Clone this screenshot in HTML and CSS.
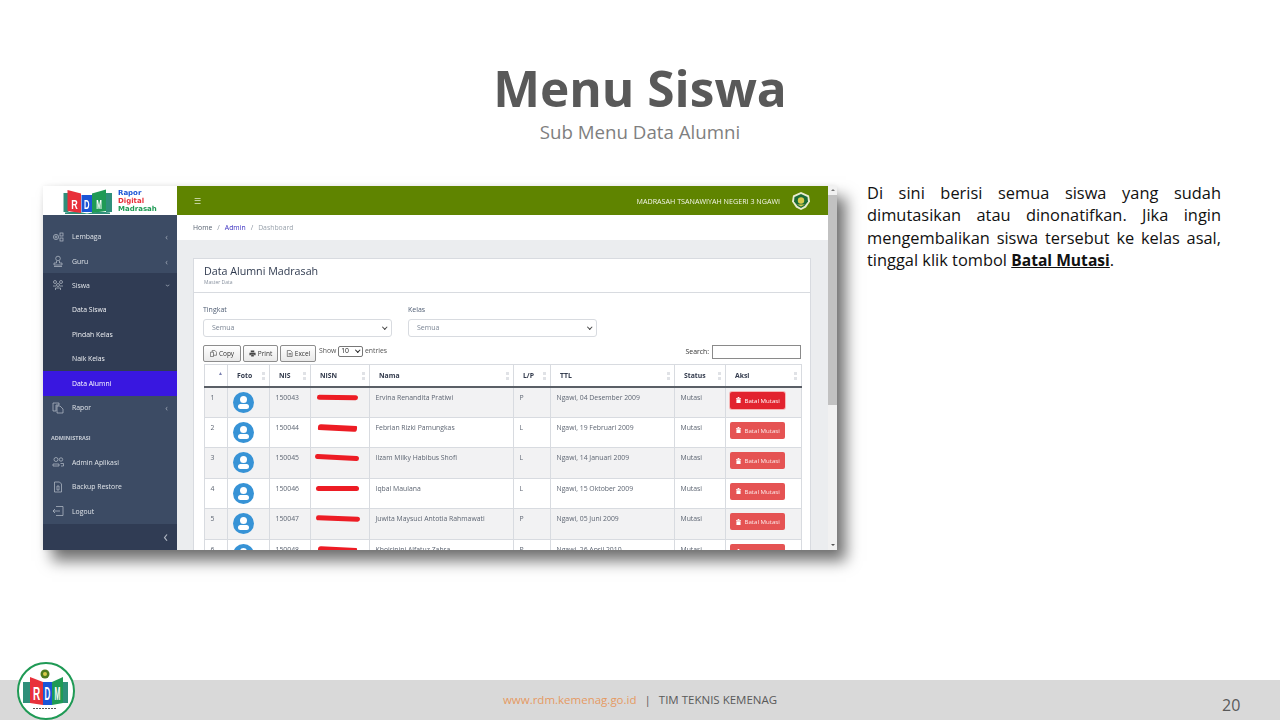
FILE: index.html
```html
<!DOCTYPE html>
<html lang="id">
<head>
<meta charset="utf-8">
<title>Menu Siswa</title>
<link rel="stylesheet" href="styles.css">
</head>
<body>
<div class="slide">
  <header class="head">
    <h1>Menu Siswa</h1>
    <p>Sub Menu Data Alumni</p>
  </header>
  <main class="body">
    <div class="shot">
      <aside class="side">
        <div class="brand">
          <svg class="brand-logo" width="50" height="26" viewBox="0 0 50 26">
            <path d="M0.500 5h5v19h-5zM43 5h6v19h-6z" fill="#2f8f7a"/>
            <path d="M2 24.500q11 -2 22 1q11 -3 23 -1v1.500H2z" fill="#2f8f7a"/>
            <path d="M4.500 2l13.500 3.500V25L4.500 23z" fill="#e8303a"/>
            <path d="M29 5.500L43 1.500V23L29 25z" fill="#1f9a55"/>
            <rect x="18.500" y="7" width="10.500" height="17" fill="#1b55d6"/>
            <text class="logo-l" transform="translate(11.500 20.500) scale(1 1.500)">R</text>
            <text class="logo-l" transform="translate(23.800 20.500) scale(.85 1.500)">D</text>
            <text class="logo-l" transform="translate(36 20.500) scale(.75 1.500)">M</text>
          </svg>
          <div class="brand-text"><span class="b1">Rapor</span><span class="b2">Digital</span><span class="b3">Madrasah</span></div>
        </div>
        <nav class="menu">
          <a class="item"><svg class="ic" viewBox="0 0 12 12"><circle cx="4" cy="6" r="2.600"/><circle cx="4" cy="6" r="1"/><rect x="8" y="2" width="3" height="3"/><rect x="8" y="7" width="3" height="3"/></svg><span>Lembaga</span><i class="chev">‹</i></a>
          <a class="item"><svg class="ic" viewBox="0 0 12 12"><circle cx="6" cy="3.500" r="2.300"/><path d="M4.500 6v2H2v2h8V8H7.500V6M2 11.500h8"/></svg><span>Guru</span><i class="chev">‹</i></a>
          <div class="group">
            <a class="item"><svg class="ic" viewBox="0 0 12 12"><circle cx="3" cy="3" r="1.500"/><circle cx="9" cy="3" r="1.500"/><circle cx="6" cy="6" r="1.500"/><path d="M1 7h3M8 7h3M3.500 11V9h5v2"/></svg><span>Siswa</span><i class="chev down">‹</i></a>
            <a class="sub">Data Siswa</a>
            <a class="sub">Pindah Kelas</a>
            <a class="sub">Naik Kelas</a>
            <a class="sub active">Data Alumni</a>
          </div>
          <a class="item"><svg class="ic" viewBox="0 0 12 12"><path d="M1 1h6v2H4v6H1zM5 4h3l3 3v4H5z"/></svg><span>Rapor</span><i class="chev">‹</i></a>
          <div class="title">ADMINISTRASI</div>
          <a class="item"><svg class="ic" viewBox="0 0 12 12"><circle cx="4" cy="3.500" r="2"/><circle cx="9" cy="3.500" r="1.700"/><path d="M1 10V8h6v2zM8.500 7.500H11.500V10H9"/></svg><span>Admin Aplikasi</span></a>
          <a class="item"><svg class="ic" viewBox="0 0 12 12"><path d="M2.500 1h5l2 2v8h-7zM5 5h2v4H5z"/></svg><span>Backup Restore</span></a>
          <a class="item"><svg class="ic" viewBox="0 0 12 12"><path d="M4 1.500h7v9H4M8 6H1M3 4L1 6l2 2"/></svg><span>Logout</span></a>
        </nav>
        <div class="toggle">‹</div>
      </aside>
      <section class="app">
        <div class="topbar">
          <span class="burger">☰</span>
          <span class="school">MADRASAH TSANAWIYAH NEGERI 3 NGAWI</span>
          <svg class="emblem" width="20" height="20" viewBox="0 0 20 20"><path d="M10 1l8 3.500 1 6-4 6-5 2.500-5-2.500-4-6 1-6z" fill="#e9eccf"/><path d="M10 3l6.500 3 .5 4.500-3.500 4.500L10 17l-3.500-2-3.500-4.500L3.500 6z" fill="#1c6b35"/><circle cx="10" cy="9.500" r="3.200" fill="#d9c94a"/><path d="M6 13.500h8l-4 2z" fill="#d9c94a"/></svg>
        </div>
        <div class="crumbs"><span>Home</span><em>/</em><a>Admin</a><em>/</em><span class="muted">Dashboard</span></div>
        <div class="content">
          <div class="card">
            <div class="card-head">
              <h2>Data Alumni Madrasah</h2>
              <small>Master Data</small>
            </div>
            <div class="card-body">
              <div class="filters">
                <label class="field f1">Tingkat<span class="select">Semua<i></i></span></label>
                <label class="field f2">Kelas<span class="select">Semua<i></i></span></label>
              </div>
              <div class="tools">
                <span class="btn b-copy"><svg class="bi" viewBox="0 0 8 8"><path d="M.5 2.500h3.500v5H.5zM2.500 2.500V.5h3l2 2v3.500H4"/></svg>Copy</span><span class="btn b-print"><svg class="bi fill" viewBox="0 0 8 8"><path d="M2 .5h4v2H2zM.5 3h7v3H6V5H2v1H.5zM2.500 5.500h3v2h-3z"/></svg>Print</span><span class="btn b-excel"><svg class="bi" viewBox="0 0 8 8"><path d="M1.500.5h3.500l2 2v5H1.500zM3 4h3M3 5.500h3"/></svg>Excel</span>
                <span class="show">Show <span class="len">10<i></i></span> entries</span>
                <span class="search">Search: <span class="box"></span></span>
              </div>
              <table class="grid">
                <colgroup><col class="c1"><col class="c2"><col class="c3"><col class="c4"><col class="c5"><col class="c6"><col class="c7"><col class="c8"><col class="c9"></colgroup>
                <thead><tr>
                  <th class="asc"><i>▲</i></th><th>Foto<b></b></th><th>NIS<b></b></th><th>NISN<b></b></th><th>Nama<b></b></th><th>L/P<b></b></th><th>TTL<b></b></th><th>Status<b></b></th><th>Aksi<b></b></th>
                </tr></thead>
                <tbody>
                  <tr class="odd"><td>1</td><td><span class="ava"><s></s><u></u></span></td><td>150043</td><td><span class="red r1"></span></td><td>Ervina Renandita Pratiwi</td><td>P</td><td>Ngawi, 04 Desember 2009</td><td>Mutasi</td><td><span class="del hot"><svg class="tr" viewBox="0 0 6 7"><path d="M2 0h2v1h2v1H0V1h2zM.5 2.500h5V7h-5z"/></svg>Batal Mutasi</span></td></tr>
                  <tr><td>2</td><td><span class="ava"><s></s><u></u></span></td><td>150044</td><td><span class="red r2"></span></td><td>Febrian Rizki Pamungkas</td><td>L</td><td>Ngawi, 19 Februari 2009</td><td>Mutasi</td><td><span class="del"><svg class="tr" viewBox="0 0 6 7"><path d="M2 0h2v1h2v1H0V1h2zM.5 2.500h5V7h-5z"/></svg>Batal Mutasi</span></td></tr>
                  <tr class="odd"><td>3</td><td><span class="ava"><s></s><u></u></span></td><td>150045</td><td><span class="red r3"></span></td><td>Ilzam Milky Habibus Shofi</td><td>L</td><td>Ngawi, 14 Januari 2009</td><td>Mutasi</td><td><span class="del"><svg class="tr" viewBox="0 0 6 7"><path d="M2 0h2v1h2v1H0V1h2zM.5 2.500h5V7h-5z"/></svg>Batal Mutasi</span></td></tr>
                  <tr><td>4</td><td><span class="ava"><s></s><u></u></span></td><td>150046</td><td><span class="red r4"></span></td><td>Iqbal Maulana</td><td>L</td><td>Ngawi, 15 Oktober 2009</td><td>Mutasi</td><td><span class="del"><svg class="tr" viewBox="0 0 6 7"><path d="M2 0h2v1h2v1H0V1h2zM.5 2.500h5V7h-5z"/></svg>Batal Mutasi</span></td></tr>
                  <tr class="odd"><td>5</td><td><span class="ava"><s></s><u></u></span></td><td>150047</td><td><span class="red r5"></span></td><td>Juwita Maysuci Antotia Rahmawati</td><td>P</td><td>Ngawi, 05 Juni 2009</td><td>Mutasi</td><td><span class="del"><svg class="tr" viewBox="0 0 6 7"><path d="M2 0h2v1h2v1H0V1h2zM.5 2.500h5V7h-5z"/></svg>Batal Mutasi</span></td></tr>
                  <tr><td>6</td><td><span class="ava"><s></s><u></u></span></td><td>150048</td><td><span class="red r2"></span></td><td>Khoirinini Alfatuz Zahra</td><td>P</td><td>Ngawi, 26 April 2010</td><td>Mutasi</td><td><span class="del"><svg class="tr" viewBox="0 0 6 7"><path d="M2 0h2v1h2v1H0V1h2zM.5 2.500h5V7h-5z"/></svg>Batal Mutasi</span></td></tr>
                </tbody>
              </table>
            </div>
          </div>
        </div>
      </section>
      <div class="scroll"><span class="up"></span><span class="thumb"></span><span class="dn"></span></div>
    </div>
    <p class="note">Di sini berisi semua siswa yang sudah dimutasikan atau dinonatifkan. Jika ingin mengembalikan siswa tersebut ke kelas asal, tinggal klik tombol <strong>Batal Mutasi</strong>.</p>
  </main>
  <footer class="foot">
    <svg class="foot-logo" width="60" height="60" viewBox="0 0 60 60">
      <circle cx="30" cy="30" r="28" fill="#fff" stroke="#1f9a55" stroke-width="2"/>
      <circle cx="29" cy="13" r="4.500" fill="#4f7a1e"/>
      <circle cx="29" cy="13" r="2" fill="#d9c94a"/>
      <path d="M7 21h7v21H7zM47 21h5v21h-5z" fill="#2f8f7a"/>
      <path d="M14 16l13 5v23l-13-2z" fill="#e8303a"/>
      <path d="M36 21l11-5v26l-11 2z" fill="#1f9a55"/>
      <rect x="27" y="21" width="9" height="23" fill="#1b55d6"/>
      <text class="logo-f" transform="translate(20.500 39) scale(1 1.900)">R</text>
      <text class="logo-f" transform="translate(31.500 39) scale(.8 1.900)">D</text>
      <text class="logo-f" transform="translate(41.500 39) scale(.7 1.900)">M</text>
      <path d="M17 47.500h24" stroke="#555" stroke-width="1" stroke-dasharray="2 1"/>
    </svg>
    <p class="foot-text"><span class="url">www.rdm.kemenag.go.id</span><span class="bar">|</span>TIM TEKNIS KEMENAG</p>
    <span class="page">20</span>
  </footer>
</div>
</body>
</html>
```
FILE: styles.css
```css
* { box-sizing: border-box; }
html, body { margin: 0; padding: 0; }
body { width: 1280px; height: 720px; overflow: hidden; background: #fff; font-family: "Open Sans", "Liberation Sans", sans-serif; }
.slide { position: relative; width: 1280px; height: 720px; display: flex; flex-direction: column; }

.head { height: 186px; padding-top: 53px; text-align: center; flex: none; }
.head h1 { margin: 0; font-size: 49.600px; line-height: 70px; font-weight: 700; color: #595959; }
.head p { margin: -3px 0 0; font-size: 18.700px; line-height: 20px; padding-top: 2px; color: #7f7f7f; }

.body { flex: 1; display: flex; align-items: flex-start; padding-left: 43px; }
.shot { width: 794px; height: 364px; flex: none; display: flex; overflow: hidden; background: #fff; font-size: 6.850px; color: #4f5d73; box-shadow: 9px 11px 14px rgba(0,0,0,.55), 0 0 6px rgba(0,0,0,.08); filter: blur(.35px); }

.side { width: 134px; flex: none; display: flex; flex-direction: column; background: #3c4b64; color: #e3e6ea; }
.brand { height: 29px; background: #fff; display: flex; align-items: center; padding: 0 0 0 20px; gap: 5px; flex: none; }
.brand-logo { flex: none; }
.logo-l { font: 700 9px "Liberation Sans", sans-serif; fill: #fff; text-anchor: middle; }
.logo-f { font: 700 10px "Liberation Sans", sans-serif; fill: #fff; text-anchor: middle; }
.brand-text { display: flex; flex-direction: column; font: 700 7px/8px "DejaVu Sans", sans-serif; }
.b1 { color: #1b55d6; } .b2 { color: #e8303a; } .b3 { color: #1f9a55; }
.menu { flex: 1; padding-top: 9.500px; }
.item, .sub { display: flex; align-items: center; height: 24.500px; white-space: nowrap; }
.item { padding-left: 9px; color: #dfe3e8; }
.item span { margin-left: 8px; }
.ic { width: 12px; height: 12px; flex: none; fill: none; stroke: #b9c1cc; stroke-width: .7; }
.chev { margin-left: auto; margin-right: 9px; font-style: normal; color: #98a2b1; font-size: 9px; }
.chev.down { transform: rotate(-90deg); }
.group { background: #303c54; margin-top: -.5px; }
.sub { padding-left: 29px; color: #eef0f3; }
.sub.active { background: #3917e0; color: #fff; }
.title { height: 30px; padding: 14px 0 0 8px; font-size: 5.500px; font-weight: 700; color: #c5cbd4; }
.toggle { height: 26px; background: #303c54; color: #aeb6c2; font-size: 16px; line-height: 24px; text-align: right; padding-right: 9px; flex: none; }

.app { width: 651px; flex: none; display: flex; flex-direction: column; background: #ebedef; }
.topbar { height: 29px; background: #5f8400; display: flex; align-items: center; color: #fff; padding: 0 17px; flex: none; }
.burger { font-size: 8px; color: #dfe8c8; }
.school { margin-left: auto; font-size: 7.150px; color: #f4f6ea; }
.emblem { margin-left: 11px; }
.crumbs { height: 25px; background: #fff; display: flex; align-items: center; gap: 4px; padding-left: 16px; flex: none; color: #5a6473; }
.crumbs em { font-style: normal; color: #8a93a0; margin: 0 1px; }
.crumbs a { color: #3a2fc0; }
.muted { color: #9aa3ad; }
.content { flex: 1; padding: 18px 17px 0 16px; min-height: 0; }
.card { background: #fff; border: 1px solid #d8dbe0; height: 400px; }
.card-head { height: 34px; border-bottom: 1px solid #d8dbe0; padding: 5px 10px; }
.card-head h2 { margin: 0; font-size: 10.700px; line-height: 14px; font-weight: 400; color: #2f3a4f; }
.card-head small { display: block; margin-top: 1px; font-size: 5px; line-height: 6px; color: #8a93a0; }
.card-body { padding: 0 9px 0 10px; }
.filters { display: flex; padding-top: 11px; height: 51px; margin-left: -1px; }
.field { display: block; font-size: 7px; line-height: 12px; color: #4f5d73; }
.f1 { width: 205px; }
.f2 { width: 189px; }
.select { display: flex; justify-content: space-between; align-items: center; height: 18px; margin-top: 3px; border: 1px solid #d8dbe0; border-radius: 3px; padding: 0 5px 0 8px; color: #7b8594; font-size: 7px; }
.f1 .select { width: 189px; }
.select i { display: block; width: 3.500px; height: 3.500px; border-right: 1px solid #444; border-bottom: 1px solid #444; transform: rotate(45deg); margin-top: -2px; }
.tools { display: flex; align-items: flex-start; height: 20px; margin-left: -1px; }
.btn { display: flex; align-items: center; justify-content: center; gap: 2px; height: 17px; margin-top: 1px; border: 1px solid #8d8d8d; background: linear-gradient(#fff, #e9e9e9); border-radius: 2px; color: #333; font-size: 6.500px; margin-right: 2px; white-space: nowrap; }
.bi { width: 7px; height: 7px; fill: none; stroke: #444; stroke-width: .7; flex: none; }
.bi.fill { fill: #444; stroke: none; }
.b-copy { width: 38px; } .b-print { width: 35px; } .b-excel { width: 36px; }
.show { margin: 1px 0 0 1px; line-height: 12px; color: #555; white-space: nowrap; }
.len { display: inline-flex; align-items: center; justify-content: space-between; width: 25px; height: 11px; border: 1px solid #777; border-radius: 2px; padding: 0 3px 0 2px; color: #222; }
.len i { display: block; width: 3.500px; height: 3.500px; border-right: 1px solid #222; border-bottom: 1px solid #222; transform: rotate(45deg); margin-top: -2px; }
.search { margin: 1px 0 0 auto; color: #333; line-height: 14px; display: flex; align-items: center; gap: 3px; }
.box { display: block; width: 89px; height: 14px; border: 1px solid #8a8a8a; background: #fff; }
.grid { width: 597px; table-layout: fixed; border-collapse: collapse; font-size: 6.850px; }
.c1 { width: 23px; } .c2 { width: 42px; } .c3 { width: 41px; } .c4 { width: 59px; } .c5 { width: 144px; } .c6 { width: 37px; } .c7 { width: 124px; } .c8 { width: 51px; } .c9 { width: 76px; }
.grid th, .grid td { border: 1px solid #d8dbe0; text-align: left; vertical-align: top; }
.grid th { position: relative; height: 22px; padding: 5.500px 9px; color: #333b4d; font-weight: 700; border-bottom: 2px solid #5a5f66; }
.grid th b { position: absolute; right: 4px; top: 7px; width: 3px; height: 8px; background: linear-gradient(#e0e2e6 40%, transparent 40%, transparent 60%, #e0e2e6 60%); }
.asc i { position: absolute; right: 4px; top: 5px; font-size: 5px; font-style: normal; color: #7a80b0; }
.grid td { height: 30.600px; padding: 5px 5.500px; color: #5e6673; white-space: nowrap; overflow: hidden; }
.odd td { background: #f2f2f3; }
.grid td:nth-child(2) { padding: 4px 0 0 5px; }
.ava { display: block; position: relative; width: 21px; height: 21px; border-radius: 50%; background: #3793d6; overflow: hidden; }
.ava s { position: absolute; left: 7px; top: 4px; width: 7px; height: 7px; border-radius: 50%; background: #fff; }
.ava u { position: absolute; left: 5px; top: 12px; width: 11px; height: 5px; border-radius: 3px; background: #fff; }
.red { display: block; height: 5px; border-radius: 3px; background: #ed1c24; margin-top: 2px; }
.r1 { width: 41px; transform: rotate(1deg); }
.r2 { width: 39px; height: 6px; margin-left: 1px; margin-top: 2px; border-radius: 3px 1px 3px 1px; transform: rotate(3deg); }
.r3 { width: 44px; margin-left: -2px; transform: rotate(3deg); }
.r4 { width: 43px; margin-left: -1px; }
.r5 { width: 44px; margin-left: -1px; transform: rotate(2deg); }
.del { display: flex; align-items: center; gap: 3.500px; width: 55px; height: 17px; padding-left: 6px; border-radius: 2px; background: #e55353; color: #fbeaea; font-size: 6.100px; }
.tr { width: 5px; height: 6px; fill: #fff; flex: none; }
.grid td:last-child { padding-top: 4px; padding-left: 4px; }
.del.hot { background: #e2232e; box-shadow: 0 0 0 1px #f6b7b7; color: #fff; }

.scroll { width: 9px; flex: none; background: #f1f1f1; display: flex; flex-direction: column; align-items: stretch; }
.up, .dn { display: block; height: 9px; position: relative; }
.thumb { display: block; height: 210px; background: #c1c1c1; }
.dn { margin-top: auto; }
.up::after, .dn::after { content: ""; position: absolute; left: 2.500px; top: 3px; border: 2px solid transparent; }
.up::after { border-bottom-color: #777; border-top-width: 0; }
.dn::after { border-top-color: #555; border-bottom-width: 0; }

.note { width: 354px; margin: -4px 0 0 30px; font-size: 16.400px; line-height: 22.300px; color: #111; text-align: justify; }
.note strong { font-size: 15.600px; text-decoration: underline; font-weight: 700; }

.foot { height: 40px; flex: none; background: #d9d9d9; display: flex; align-items: center; justify-content: center; position: relative; }
.foot-logo { position: absolute; left: 16px; top: -19px; }
.foot-text { margin: -2px 0 0; font-size: 11.500px; color: #595959; white-space: nowrap; }
.url { color: #e59a63; }
.bar { margin: 0 8px; }
.page { position: absolute; left: 1222px; top: 15px; font-size: 16px; line-height: 20px; color: #595959; }
```
